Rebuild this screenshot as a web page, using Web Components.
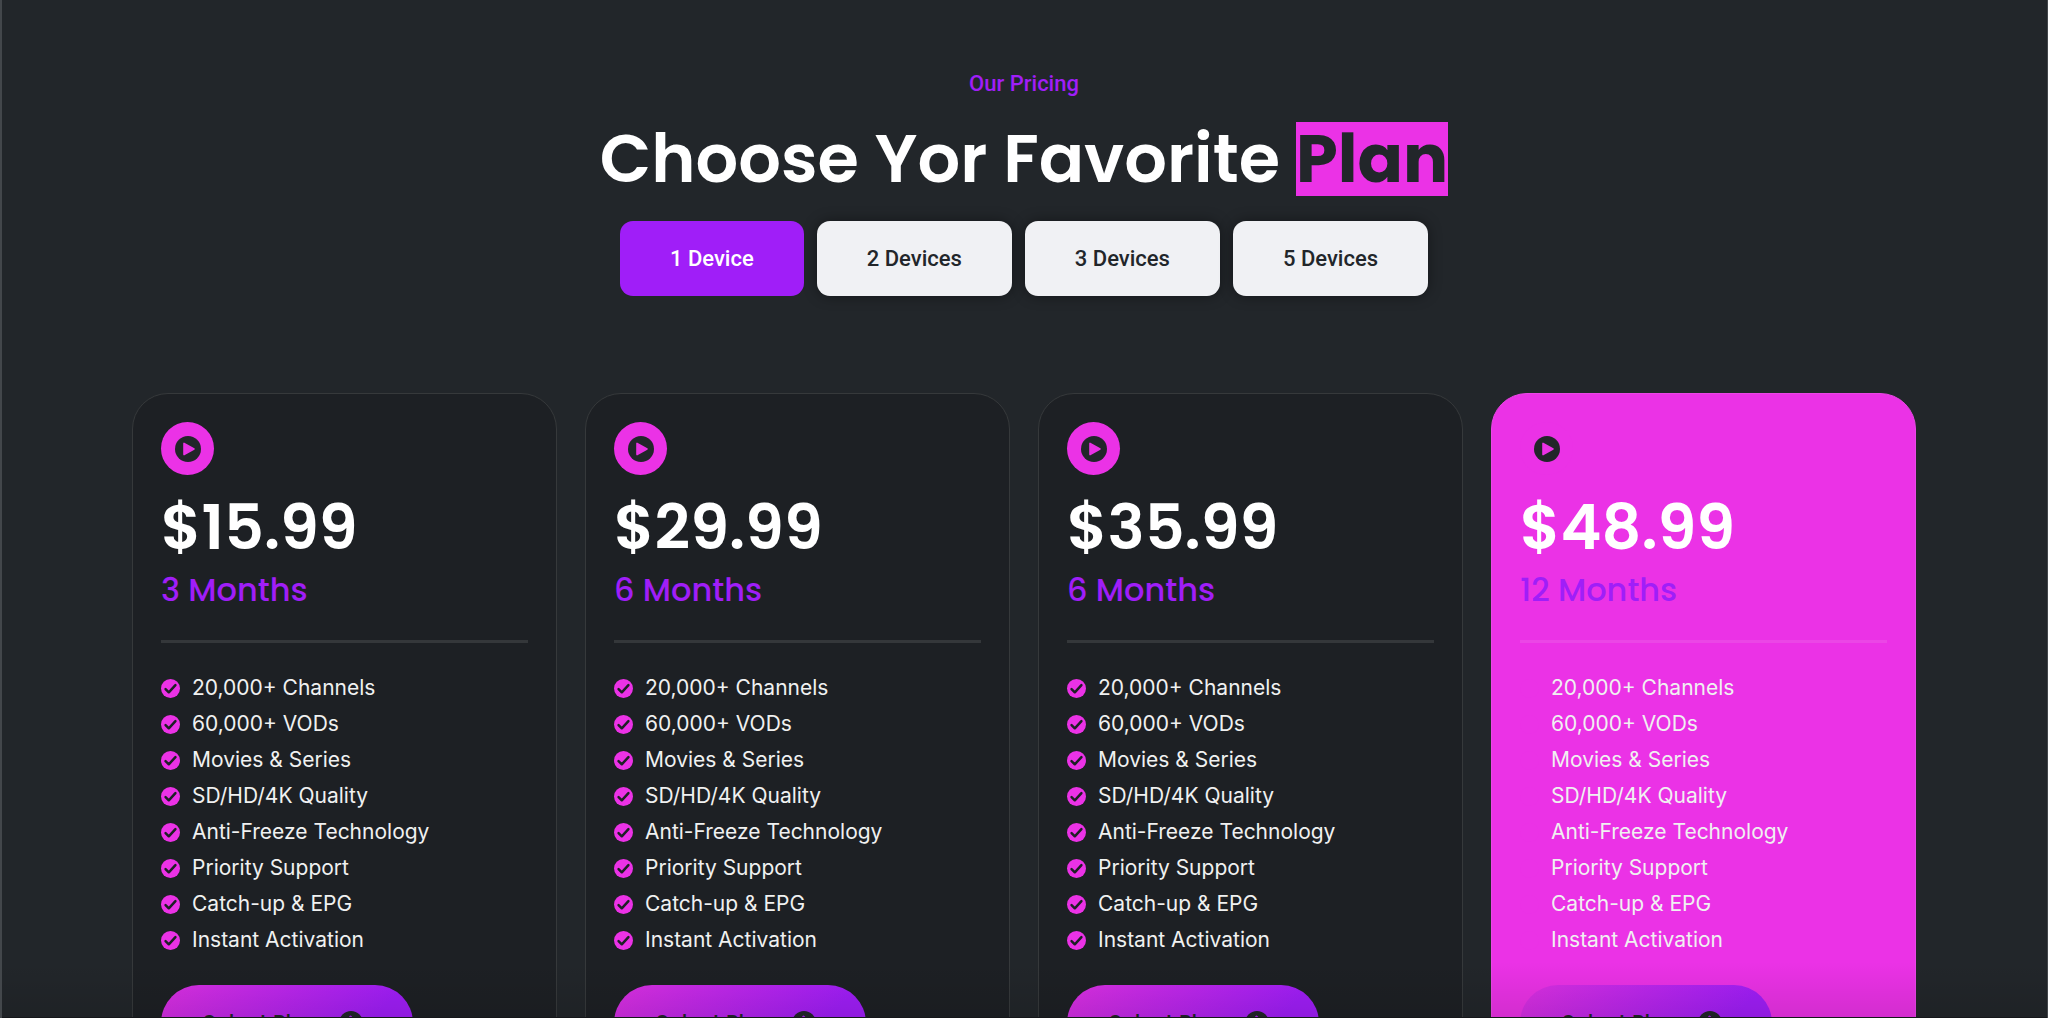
<!DOCTYPE html>
<html lang="en">
<head>
<meta charset="utf-8">
<title>Our Pricing</title>
<style>
  :root {
    --dark: #22262a;
    --card: #1d2024;
    --pink: #eb32e6;
    --violet: #a01ef8;
    --display: Poppins, Inter, sans-serif;
    --text: Roboto, sans-serif;
    --list: Inter, sans-serif;
  }

  body {
    margin: 0;
    background: var(--dark);
    color: #fff;
    font-family: var(--text);
  }
</style>
</head>
<body>
<pricing-section>
  <section-title slot="title" eyebrow="Our Pricing" highlight="Plan">Choose Yor Favorite</section-title>
  <device-tabs slot="tabs">
    <device-tab active>1 Device</device-tab>
    <device-tab>2 Devices</device-tab>
    <device-tab>3 Devices</device-tab>
    <device-tab>5 Devices</device-tab>
  </device-tabs>
  <plan-card price="$15.99" period="3 Months"></plan-card>
  <plan-card price="$29.99" period="6 Months"></plan-card>
  <plan-card price="$35.99" period="6 Months"></plan-card>
  <plan-card price="$48.99" period="12 Months" featured></plan-card>
</pricing-section>

<script>
const FEATURES = [
  '20,000+ Channels',
  '60,000+ VODs',
  'Movies & Series',
  'SD/HD/4K Quality',
  'Anti-Freeze Technology',
  'Priority Support',
  'Catch-up & EPG',
  'Instant Activation',
];

class BaseComponent extends HTMLElement {
  constructor() {
    super();
    this.attachShadow({ mode: 'open' });
  }

  connectedCallback() {
    const template = document.createElement('template');
    template.innerHTML = this.render();
    this.shadowRoot.replaceChildren(template.content.cloneNode(true));
  }
}

class PricingSection extends BaseComponent {
  render() {
    return `
      <style>
      :host {
        display: block;
        position: relative;
        box-sizing: border-box;
        height: 100vh;
        overflow: hidden;
        border: solid #43474b;
        border-width: 0 1px 0 2px;
      }

      .inner {
        display: flex;
        flex-direction: column;
        padding: 69px 131px 80px 130px;
      }

      .plans {
        display: grid;
        grid-template-columns: repeat(4, 1fr);
        gap: 28px;
        margin-top: 97px;
      }

      /* soft shade along the bottom of the window */
      .shade {
        position: absolute;
        left: 0;
        right: 0;
        bottom: 0;
        box-sizing: border-box;
        height: 56px;
        border-bottom: 1px solid #15171a;
        background: linear-gradient(rgba(0, 0, 0, 0), rgba(0, 0, 0, 0.1));
        pointer-events: none;
      }
      </style>
      <section class="inner">
        <slot name="title"></slot>
        <slot name="tabs"></slot>
        <div class="plans"><slot></slot></div>
      </section>
      <div class="shade"></div>
    `;
  }
}

class SectionTitle extends BaseComponent {
  render() {
    return `
      <style>
      :host {
        display: block;
        text-align: center;
      }

      p {
        margin: 0;
        color: var(--violet);
        font-size: 22px;
        font-weight: 500;
        line-height: 30px;
      }

      h2 {
        margin: 23px 0 25px;
        font: 600 67px/74px var(--display);
      }

      mark {
        display: inline-block;
        background: var(--pink);
        color: var(--dark);
        font-weight: 700;
      }
      </style>
      <p>${this.getAttribute('eyebrow')}</p>
      <h2><slot></slot> <mark>${this.getAttribute('highlight')}</mark></h2>
    `;
  }
}

class DeviceTabs extends BaseComponent {
  render() {
    return `
      <style>
      :host {
        display: flex;
        justify-content: center;
        gap: 13px;
      }
      </style>
      <slot></slot>
    `;
  }
}

class DeviceTab extends BaseComponent {
  render() {
    return `
      <style>
      :host {
        display: block;
      }

      button {
        display: block;
        padding: 0 50px;
        border: 0;
        border-radius: 13px;
        background: #f0f1f4;
        box-shadow: 0 0 14px rgba(0, 0, 0, 0.4);
        color: var(--dark);
        font: 500 22px/75px var(--text);
        cursor: pointer;
      }

      :host([active]) button {
        background: var(--violet);
        box-shadow: none;
        color: #fff;
      }
      </style>
      <button type="button" aria-pressed="${this.hasAttribute('active')}"><slot></slot></button>
    `;
  }
}

class PlanCard extends BaseComponent {
  render() {
    const items = FEATURES.map((feature) => `
      <li>
        <svg viewBox="0 0 20 20" aria-hidden="true">
          <circle cx="10" cy="10" r="10"/>
          <path d="M4.8 10.6l3.4 3.4 7-7.6"/>
        </svg>
        <span>${feature.replace('&', '&amp;')}</span>
      </li>`).join('');

    return `
      <style>
      :host {
        display: block;
        box-sizing: border-box;
        padding: 28px;
        border: 1px solid #36393b;
        border-radius: 36px;
        background: var(--card);
      }

      :host([featured]) {
        border-color: #eb46e6;
        background: var(--pink);
      }

      .icon {
        display: grid;
        place-items: center;
        width: 53px;
        height: 53px;
        border-radius: 50%;
        background: var(--pink);
      }

      .icon svg {
        width: 26px;
        height: 26px;
      }

      .price {
        margin: 17px 0 0;
        font: 600 62px/72px var(--display);
      }

      .period {
        margin: 6px 0 0;
        color: var(--violet);
        font: 500 32px/40px var(--display);
      }

      hr {
        height: 3px;
        margin: 30px 0 27px;
        border: 0;
        background: #34373a;
      }

      :host([featured]) hr {
        background: #eb46e6;
      }

      ul {
        margin: 0;
        padding: 0;
        list-style: none;
      }

      li {
        display: flex;
        align-items: center;
        gap: 12px;
        color: #f0f1f1;
        font: 400 21px/36px var(--list);
      }

      li svg {
        width: 19px;
        height: 19px;
        fill: var(--pink);
      }

      li path {
        fill: none;
        stroke: var(--card);
        stroke-width: 2.6;
        stroke-linecap: round;
        stroke-linejoin: round;
      }

      :host([featured]) li path {
        stroke: none;
      }

      button {
        display: flex;
        align-items: center;
        gap: 20px;
        margin-top: 27px;
        padding: 0 50px 0 42px;
        border: 0;
        border-radius: 38px;
        background: linear-gradient(135deg, #dc30e2, var(--violet) 75%);
        color: var(--dark);
        font: 500 21px/76px var(--display);
        cursor: pointer;
      }

      button svg {
        width: 24px;
        height: 24px;
      }
      </style>
      <div class="icon">
        <svg viewBox="0 0 26 26" aria-hidden="true">
          <circle cx="13" cy="13" r="13" fill="#22262a"/>
          <path d="M9 7.400v11.200l10-5.600z" fill="#eb32e6" stroke="#eb32e6" stroke-width="1.600" stroke-linejoin="round"/>
        </svg>
      </div>
      <h3 class="price">${this.getAttribute('price')}</h3>
      <p class="period">${this.getAttribute('period')}</p>
      <hr>
      <ul>${items}</ul>
      <button type="button">
        Select Plan
        <svg viewBox="0 0 24 24" aria-hidden="true">
          <circle cx="12" cy="12" r="12" fill="#22262a"/>
          <path d="M6 12h11M11.500 6l6 6-6 6" fill="none" stroke="#b122ee" stroke-width="2.600" stroke-linecap="round" stroke-linejoin="round"/>
        </svg>
      </button>
    `;
  }
}

customElements.define('pricing-section', PricingSection);
customElements.define('section-title', SectionTitle);
customElements.define('device-tabs', DeviceTabs);
customElements.define('device-tab', DeviceTab);
customElements.define('plan-card', PlanCard);
</script>
</body>
</html>
